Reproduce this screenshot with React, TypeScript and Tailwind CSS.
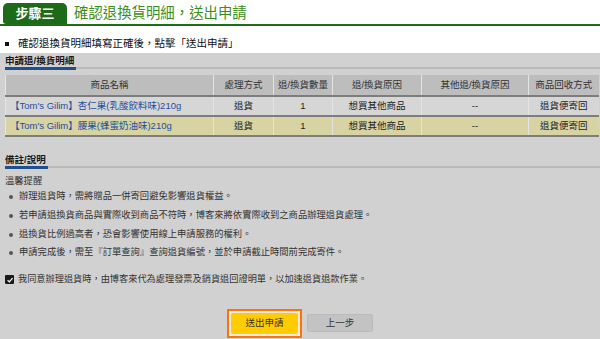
import React from "react";

const font = "font-['Liberation_Sans','Noto_Sans_CJK_TC',sans-serif]";

const cols = [208, 60, 59, 89, 107, 70];

function SectionHead({ title, blueW }: { title: string; blueW: number }) {
  return (
    <div>
      <div className="h-[13px] pl-[5px] text-[9.5px] leading-[13px] font-bold text-[#1a1a1a]">{title}</div>
      <div className="flex h-[3px] items-start pl-[5px]">
        <div className="h-[3px] bg-[#1f4f8f]" style={{ width: blueW }} />
        <div className="h-[2px] flex-1 bg-[#b9b9b9]" />
      </div>
    </div>
  );
}

function Row({ name, bg, last }: { name: string; bg: string; last?: boolean }) {
  return (
    <tr className={`h-[20px] ${bg} border-t-2 border-[#7d7d7d] ${last ? "border-b-2" : ""}`}>
      <td className="border-l border-[#e4e4e4] pl-[4px] text-left text-[#1d4f9c]">{name}</td>
      <td className="border-l border-[#e4e4e4] text-center">退貨</td>
      <td className="border-l border-[#e4e4e4] text-center">1</td>
      <td className="border-l border-[#e4e4e4] text-center">想買其他商品</td>
      <td className="border-l border-[#e4e4e4] text-center">--</td>
      <td className="border-l border-[#e4e4e4] text-center">退貨便寄回</td>
    </tr>
  );
}

export default function App() {
  const notes = [
    "辦理退貨時，需將贈品一併寄回避免影響退貨權益。",
    "若申請退換貨商品與實際收到商品不符時，博客來將依實際收到之商品辦理退貨處理。",
    "退換貨比例過高者，恐會影響使用線上申請服務的權利。",
    "申請完成後，需至『訂單查詢』查詢退貨編號，並於申請截止時間前完成寄件。",
  ];
  return (
    <div className={`${font} w-[600px] h-[339px] overflow-hidden bg-white text-[#222]`}>
      {/* header */}
      <div className="flex h-[26px] items-end border-b-2 border-[#1b6e14] pl-[3px]">
        <div className="flex h-[21px] w-[64px] items-center justify-center rounded-tl-[5px] rounded-tr-[5px] rounded-bl-[3px] bg-[#1d6a18] text-[13px] font-bold text-white">
          步驟三
        </div>
        <div className="ml-[7px] h-[21px] text-[14.4px] leading-[20px] text-[#3b8e22]">確認退換貨明細，送出申請</div>
      </div>

      {/* instruction */}
      <div className="mt-[10px] flex h-[16px] items-center pl-[5px] text-[10.5px] text-[#111]">
        <span className="mr-[9px] inline-block h-[4px] w-[4px] bg-[#111]" />
        <span>確認退換貨明細填寫正確後，點擊「送出申請」</span>
      </div>

      {/* gray panel */}
      <div className="mt-[1px] h-[286px] bg-[#d1d1d1] pt-[1px]">
        <SectionHead title="申請退/換貨明細" blueW={71} />

        <div className="mt-[5px] pl-[5px] pr-[2px]">
          <table className="w-[593px] table-fixed border-collapse text-[9.5px] text-[#222]">
            <colgroup>
              {cols.map((w, i) => (
                <col key={i} style={{ width: w }} />
              ))}
            </colgroup>
            <thead>
              <tr className="h-[21px] bg-[#bdbdbd] text-[#333]">
                <th className="border-l border-[#e4e4e4] font-normal">商品名稱</th>
                <th className="border-l border-[#e4e4e4] font-normal">處理方式</th>
                <th className="border-l border-[#e4e4e4] font-normal">退/換貨數量</th>
                <th className="border-l border-[#e4e4e4] font-normal">退/換貨原因</th>
                <th className="border-l border-[#e4e4e4] font-normal">其他退/換貨原因</th>
                <th className="border-l border-[#e4e4e4] font-normal">商品回收方式</th>
              </tr>
            </thead>
            <tbody>
              <Row name="【Tom's Gilim】杏仁果(乳酸飲料味)210g" bg="bg-[#d6d6d6]" />
              <Row name="【Tom's Gilim】腰果(蜂蜜奶油味)210g" bg="bg-[#d7d3a3]" last />
            </tbody>
          </table>
        </div>

        <div className="mt-[16px]">
          <SectionHead title="備註/說明" blueW={43} />
        </div>

        <div className="mt-[5px] h-[14px] pl-[5px] text-[9.3px] leading-[14px] text-[#333]">溫馨提醒</div>
        <div>
          {notes.map((n, i) => (
            <div key={i} className="flex h-[18.7px] items-center pl-[9px] text-[9.3px] text-[#333]">
              <span className="mr-[6px] inline-block h-[4px] w-[4px] rounded-full bg-[#555]" />
              <span>{n}</span>
            </div>
          ))}
        </div>

        <div className="mt-[10px] flex h-[14px] items-center pl-[5px] text-[9.2px] text-[#333]">
          <span className="mr-[4px] flex h-[9px] w-[9px] items-center justify-center rounded-[1px] bg-[#1a1a1a]">
            <svg viewBox="0 0 10 10" className="h-[8px] w-[8px]">
              <path d="M2 5.2 L4.2 7.3 L8.2 2.6" fill="none" stroke="white" strokeWidth="1.6" />
            </svg>
          </span>
          <span>我同意辦理退貨時，由博客來代為處理發票及銷貨退回證明單，以加速退貨退款作業。</span>
        </div>

        <div className="mt-[22px] flex items-center justify-center gap-[5px]">
          <div className="border-[2px] border-[#ff7300] bg-[#ececec] p-[2px]">
            <div className="flex h-[21px] w-[67px] items-center justify-center rounded-[2px] bg-[#ffcc00] text-[9.5px] text-[#333]">
              送出申請
            </div>
          </div>
          <div className="flex h-[18px] w-[66px] items-center justify-center rounded-[2px] border border-[#bababa] bg-[#c3c3c3] text-[9.5px] text-[#333]">
            上一步
          </div>
        </div>
      </div>
    </div>
  );
}
